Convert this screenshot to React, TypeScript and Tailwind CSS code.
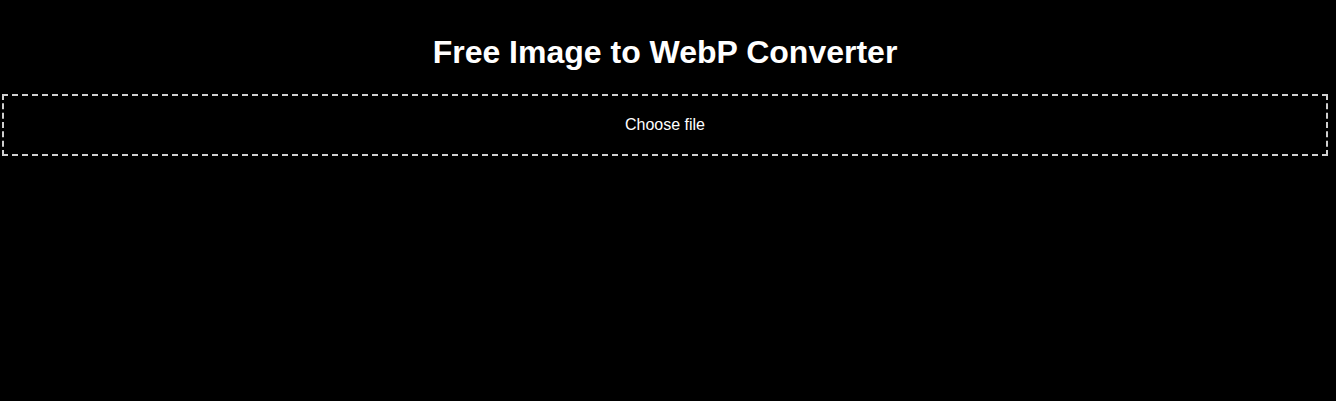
import React from "react";

export default function App() {
  return (
    <div className="w-[1336px] h-[401px] bg-black text-white overflow-hidden" style={{ fontFamily: '"Liberation Sans", Arial, sans-serif' }}>
      <div className="ml-[2px] w-[1326px]">
        <h1 className="pt-[34px] text-center text-[32px] font-bold leading-[37px] text-white">
          Free Image to WebP Converter
        </h1>
        <div className="mt-[23px] h-[62px] border-2 border-dashed border-[#d0d0d0] flex items-center justify-center">
          <span className="text-[16px] leading-[18px]">Choose file</span>
        </div>
      </div>
    </div>
  );
}
